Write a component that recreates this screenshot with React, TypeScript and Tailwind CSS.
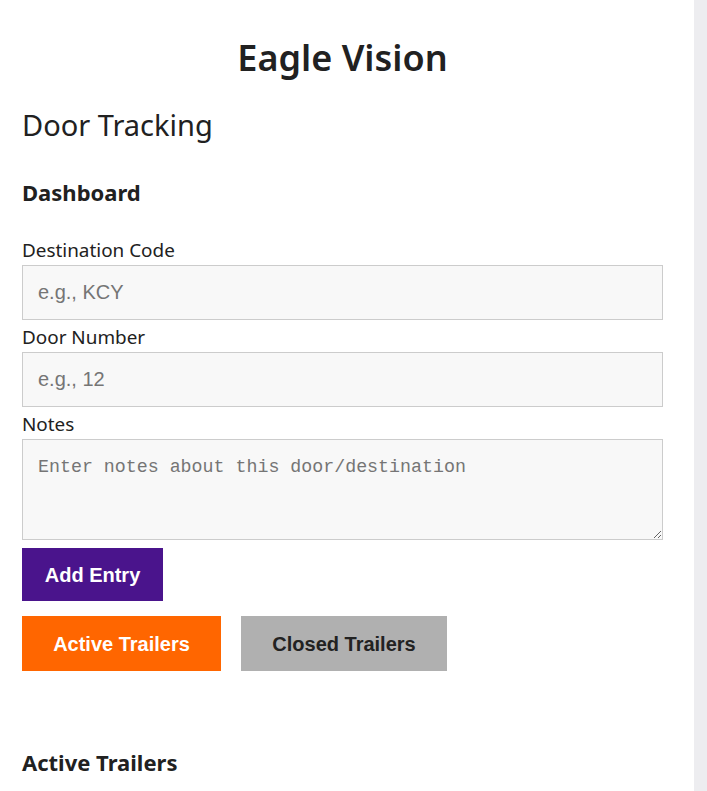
import { useState } from "react"

const sans = "font-['Noto_Sans',sans-serif]"
const arial = "font-['Liberation_Sans',Arial,sans-serif]"

function Field({ label, placeholder }: { label: string; placeholder: string }) {
  return (
    <div>
      <label className={`block mt-[5px] mb-[3px] text-[18.9px] leading-[24px] text-[#212121] ${sans}`}>{label}</label>
      <input
        type="text"
        placeholder={placeholder}
        className={`block w-full h-[55px] px-[15px] border border-[#cccccc] bg-[#f8f8f8] text-[20px] text-[#212121] placeholder:text-[#757575] outline-none ${arial}`}
      />
    </div>
  )
}

export default function App() {
  const [tab, setTab] = useState<"active" | "closed">("active")

  return (
    <div className="flex h-[791px] overflow-hidden bg-white">
      <div className="flex-1">
        <div className="ml-[22px] w-[641px]">
          <h1 className={`mt-[36px] text-center text-[36px] leading-[44px] font-semibold text-[#212121] ${sans}`}>
            Eagle Vision
          </h1>
          <h2 className={`mt-[27px] text-[29px] leading-[36px] font-normal text-[#212121] ${sans}`}>Door Tracking</h2>
          <h3 className={`mt-[35px] mb-[32px] text-[22px] leading-[28px] font-bold text-[#212121] ${sans}`}>Dashboard</h3>

          <Field label="Destination Code" placeholder="e.g., KCY" />
          <Field label="Door Number" placeholder="e.g., 12" />

          <div>
            <label className={`block mt-[5px] mb-[3px] text-[18.9px] leading-[24px] text-[#212121] ${sans}`}>Notes</label>
            <textarea
              placeholder="Enter notes about this door/destination"
              className="block w-full h-[101px] px-[15px] pt-[15px] border border-[#cccccc] bg-[#f8f8f8] text-[18.3px] leading-[24px] font-['Liberation_Mono',monospace] text-[#212121] placeholder:text-[#757575] outline-none"
            />
          </div>

          <button className={`mt-[8px] h-[53px] w-[141px] bg-[#4a148c] text-white text-[20px] font-bold ${arial}`}>
            Add Entry
          </button>

          <div className="mt-[15px] flex gap-[20px]">
            <button
              onClick={() => setTab("active")}
              className={`h-[55px] w-[199px] bg-[#ff6600] text-white text-[20px] font-bold ${arial}`}
            >
              Active Trailers
            </button>
            <button
              onClick={() => setTab("closed")}
              className={`h-[55px] w-[206px] bg-[#b0b0b0] text-[#222222] text-[20px] font-bold ${arial}`}
            >
              Closed Trailers
            </button>
          </div>

          <h3 className={`mt-[77px] text-[22px] leading-[28px] font-bold text-[#212121] ${sans}`}>
            {tab === "active" ? "Active Trailers" : "Closed Trailers"}
          </h3>
        </div>
      </div>
      <div className="w-[13px] bg-[#ededf0]" />
    </div>
  )
}
